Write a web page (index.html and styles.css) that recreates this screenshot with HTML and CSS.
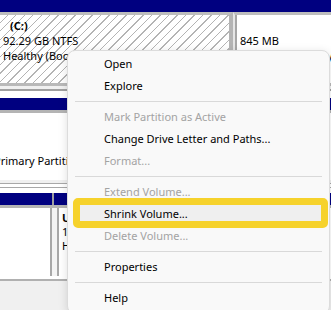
FILE: index.html
```html
<!DOCTYPE html>
<html lang="en">
<head>
    <meta charset="UTF-8">
    <meta name="viewport" content="width=device-width, initial-scale=1.0">
    <title>Disk Management</title>
    <link rel="stylesheet" href="styles.css">
</head>
<body>
    <div class="disks">
        <div class="row row-top">
            <div class="part part-c">
                <div class="bar"></div>
                <div class="body hatch">
                    <div class="line name">(C:)</div>
                    <div class="line">92.29 GB NTFS</div>
                    <div class="line">Healthy (Boot, Page File, Crash Dump, Primary Partition)</div>
                </div>
            </div>
            <div class="split"></div>
            <div class="part part-r">
                <div class="bar"></div>
                <div class="body">
                    <div class="inner">
                        <div class="line">&nbsp;</div>
                        <div class="line">845 MB</div>
                        <div class="line">Healthy (Recovery Partition)</div>
                    </div>
                </div>
            </div>
        </div>
        <div class="strip"></div>

        <div class="row row-mid">
            <div class="bar"></div>
            <div class="body">
                <div class="line shifted">Primary Partition</div>
            </div>
            <div class="rule"></div>
        </div>

        <div class="row row-low">
            <div class="bars">
                <div class="bar bar-a"></div>
                <div class="bar-split"></div>
                <div class="bar bar-b"></div>
            </div>
            <div class="bodies">
                <div class="box box-a"></div>
                <div class="box box-b">
                    <div class="line name">USB (D:)</div>
                    <div class="line">14.91 GB NTFS</div>
                    <div class="line">Healthy (Primary Partition)</div>
                </div>
            </div>
            <div class="rule"></div>
        </div>
    </div>

    <div class="menu">
        <div class="item">Open</div>
        <div class="item">Explore</div>
        <div class="sep"></div>
        <div class="item off">Mark Partition as Active</div>
        <div class="item">Change Drive Letter and Paths...</div>
        <div class="item off">Format...</div>
        <div class="sep"></div>
        <div class="item off">Extend Volume...</div>
        <div class="item marked"><span>Shrink Volume...</span></div>
        <div class="item off">Delete Volume...</div>
        <div class="sep"></div>
        <div class="item">Properties</div>
        <div class="sep"></div>
        <div class="item">Help</div>
    </div>
</body>
</html>
```

FILE: styles.css
```css
body {
    margin: 0;
    width: 331px;
    height: 310px;
    overflow: hidden;
    background-color: #f0f0f0;
    font-family: "Noto Sans", "Liberation Sans", sans-serif;
    font-size: 11px;
    color: #000;
    position: relative;
}
.disks {
    width: 100%;
}
.row {
    background-color: #fff;
}
.bar {
    height: 12px;
    background-color: #000080;
}
.line {
    height: 15px;
    line-height: 15px;
    white-space: nowrap;
    overflow: hidden;
}
.name {
    font-weight: bold;
}

/* top disk */
.row-top {
    display: flex;
}
.part-c {
    width: 233px;
}
.split {
    width: 2px;
    background-color: #d4d4d4;
}
.part-r {
    flex: 1;
}
.part .body {
    height: 68px;
    border-top: 3px solid #bdbdbd;
    border-bottom: 3px solid #b9b9b9;
}
.part-c .hatch {
    height: 65px;
    border-right: 4px solid #b4b4b4;
    padding: 3px 0 0 3px;
    background-color: #fff;
    background-image: repeating-linear-gradient(135deg, transparent 0 5px, #b4b4b4 5px 6px);
}
.hatch .name {
    padding-left: 7px;
}
.part-r .body {
    border-left: 2px solid #e6e6e6;
}
.part-r .inner {
    height: 100%;
    border-left: 2px solid #a6a6a6;
    padding: 3px 0 0 3px;
    box-sizing: border-box;
}
.strip {
    height: 3px;
    background-color: #f0f0f0;
    border-bottom: 2px solid #a0a0a0;
}

/* middle disk */
.row-mid {
    padding-top: 7px;
}
.row-mid .body {
    height: 27px;
    border-top: 3px solid #b4b4b4;
    padding-top: 40px;
}
.shifted {
    margin-left: -6px;
}
.row-mid .rule {
    position: relative;
    height: 1px;
    background-color: #f0f0f0;
    border-top: 3px solid #f0f0f0;
    border-bottom: 9px solid #fff;
}
.row-mid .rule::before,
.row-mid .rule::after {
    content: "";
    position: absolute;
    left: 0;
    right: 0;
    height: 1px;
    background-color: #a8a8a8;
}
.row-mid .rule::before {
    top: 0;
}
.row-mid .rule::after {
    top: 4px;
}

/* lower disk */
.bars {
    display: flex;
}
.bar-a {
    width: 52px;
}
.bar-split {
    width: 2px;
    height: 12px;
    background-color: #a0a0a0;
}
.bar-b {
    flex: 1;
}
.bodies {
    display: flex;
    height: 68px;
    border-top: 3px solid #b4b4b4;
    background-color: #f4f4f4;
}
.box {
    background-color: #fff;
}
.box-a {
    width: 50px;
    border-right: 2px solid #a8a8a8;
}
.box-b {
    flex: 1;
    margin-left: 5px;
    border-left: 2px solid #a8a8a8;
    padding: 3px 0 0 3px;
}
.box-b .line {
    height: 14px;
    line-height: 14px;
}
.row-low .rule {
    height: 3px;
    background-color: #fff;
    border-bottom: 2px solid #b0b0b0;
}

/* context menu */
.menu {
    position: absolute;
    left: 67px;
    top: 50px;
    width: 263px;
    box-sizing: border-box;
    padding: 2px 0 4px;
    background-color: #f9f9f9;
    border: 1px solid #dcdcdc;
    border-radius: 8px;
    box-shadow: 0 2px 10px rgba(0, 0, 0, 0.13);
}
.item {
    height: 22px;
    line-height: 22px;
    padding-left: 36px;
    white-space: nowrap;
    color: #000;
}
.item.off {
    color: #a3a3a3;
}
.sep {
    height: 1px;
    margin: 4px 7px;
    background-color: #d9d9d9;
}
.marked {
    position: relative;
}
.marked::before {
    content: "";
    position: absolute;
    left: 5px;
    right: 1px;
    top: -5px;
    bottom: -3px;
    border: 7px solid #f6d22c;
    border-radius: 5px;
    background-color: #efefef;
}
.marked span {
    position: relative;
}
```
